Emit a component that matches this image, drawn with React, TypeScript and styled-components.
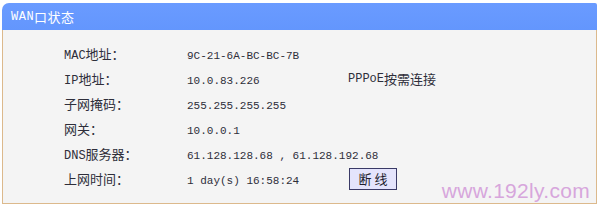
import React from 'react';
import styled, { createGlobalStyle } from 'styled-components';

const GlobalStyle = createGlobalStyle`
  html, body {
    margin: 0;
    padding: 0;
    background: #ffffff;
  }
  body {
    font-family: "Noto Sans CJK SC", "Liberation Sans", sans-serif;
    font-size: 13px;
    color: #2e2e3a;
  }
`;

type Row = { label: React.ReactNode; value: React.ReactNode; extra?: React.ReactNode };

const App: React.FC = () => {
  const rows: Row[] = [
    { label: <><Latin $big>MAC</Latin>地址：</>, value: <Latin>9C-21-6A-BC-BC-7B</Latin> },
    {
      label: <><Latin $big>IP</Latin>地址：</>,
      value: <Latin>10.0.83.226</Latin>,
      extra: <><Latin $big>PPPoE</Latin>按需连接</>,
    },
    { label: '子网掩码：', value: <Latin>255.255.255.255</Latin> },
    { label: '网关：', value: <Latin>10.0.0.1</Latin> },
    { label: <><Latin $big>DNS</Latin>服务器：</>, value: <Latin>61.128.128.68 , 61.128.192.68</Latin> },
    {
      label: '上网时间：',
      value: <Latin>1 day(s) 16:58:24</Latin>,
      extra: <DisconnectButton>断 线</DisconnectButton>,
    },
  ];

  return (
    <Page>
      <GlobalStyle />
      <Panel>
        <PanelHeader>
          <Latin $big>WAN</Latin>口状态
        </PanelHeader>
        <PanelBody>
          <InfoGrid>
            {rows.map((row, i) => (
              <React.Fragment key={i}>
                <Label>{row.label}</Label>
                <Value>{row.value}</Value>
                <Extra>{row.extra}</Extra>
              </React.Fragment>
            ))}
          </InfoGrid>
          <Watermark>www.192ly.com</Watermark>
        </PanelBody>
      </Panel>
    </Page>
  );
};

export default App;

const Page = styled.div`
  width: 600px;
  height: 208px;
  padding: 3px 3px 0 2px;
  box-sizing: border-box;
`;

const Panel = styled.div`
  width: 595px;
  display: flex;
  flex-direction: column;
`;

const PanelHeader = styled.div`
  height: 27px;
  background: linear-gradient(#6a9bff, #6396fd);
  border-top-left-radius: 7px;
  border-top-right-radius: 2px;
  color: #ffffff;
  display: flex;
  align-items: center;
  padding-left: 9px;
  font-size: 13px;
  letter-spacing: 0.5px;
`;

const PanelBody = styled.div`
  position: relative;
  height: 174px;
  box-sizing: border-box;
  background: #f4f4f4;
  border: 1px solid #dcb98c;
  border-top: none;
  padding: 11px 0 0 61px;
`;

const InfoGrid = styled.div`
  display: grid;
  grid-template-columns: 123px 161px auto;
  grid-auto-rows: 25px;
  align-items: center;
`;

const Label = styled.div`
  white-space: nowrap;
`;

const Value = styled.div`
  white-space: nowrap;
`;

const Extra = styled.div`
  white-space: nowrap;
  display: flex;
  align-items: center;
`;

const Latin = styled.span<{ $big?: boolean }>`
  font-family: "Liberation Mono", "DejaVu Sans Mono", monospace;
  font-size: ${({ $big }) => ($big ? '12px' : '11px')};
`;

const DisconnectButton = styled.button`
  width: 48px;
  height: 22px;
  margin-left: 1px;
  padding: 0;
  background: #e4e4fc;
  border: 1px solid #3a3a66;
  font-family: "Noto Sans CJK SC", sans-serif;
  font-size: 13px;
  color: #1e1e2e;
`;

const Watermark = styled.div`
  position: absolute;
  right: 6px;
  bottom: 0;
  font-family: "Liberation Sans", Arial, sans-serif;
  font-size: 21px;
  color: #d7a6dc;
  letter-spacing: 0.3px;
`;
